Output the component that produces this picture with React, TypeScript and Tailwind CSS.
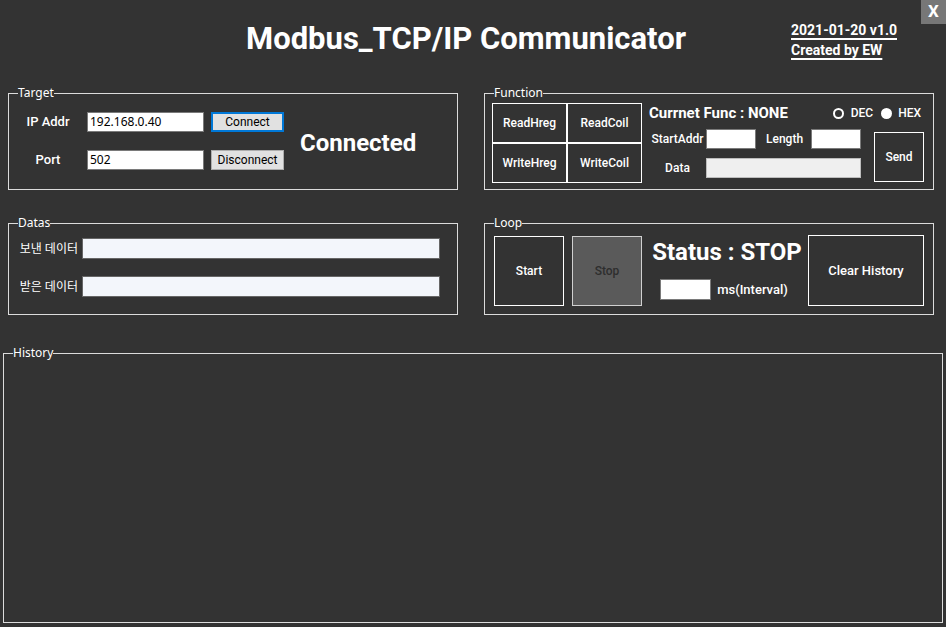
import type { ReactNode } from 'react';

const ui = "font-['Roboto',sans-serif]";
const thin = "font-['Noto_Sans','Noto_Sans_CJK_KR',sans-serif]";

const Group = ({ label, className, children }: { label: string; className?: string; children: ReactNode }) => (
  <fieldset className={`border border-[#dcdcdc] ${className ?? ''}`}>
    <legend className={`ml-[9px] px-0 text-[12px] leading-[14px] text-white ${thin}`}>{label}</legend>
    {children}
  </fieldset>
);

const OutlineBtn = ({ children, className }: { children: ReactNode; className?: string }) => (
  <div className={`flex items-center justify-center border border-white text-[12px] font-medium text-white ${className ?? ''}`}>
    {children}
  </div>
);

export default function App() {
  return (
    <div className={`w-[946px] h-[627px] bg-[#333333] flex flex-col overflow-hidden ${ui}`}>
      {/* header */}
      <div className="h-[86px] flex items-start">
        <div className="pl-[246px] pt-[21px] text-[31px] leading-[36px] font-bold text-white">
          Modbus_TCP/IP Communicator
        </div>
        <div className="ml-auto pt-[20px] flex flex-col text-[14px] leading-[20px] font-bold text-white">
          <span className="underline underline-offset-[3px] decoration-2">2021-01-20 v1.0</span>
          <span className="underline underline-offset-[3px] decoration-2">Created by EW</span>
        </div>
        <div className="ml-[24px] w-[25px] h-[24px] bg-[#777777] flex items-center justify-center text-white font-bold text-[17px]">
          X
        </div>
      </div>

      {/* row 1 */}
      <div className="flex pl-[8px] gap-[26px]">
        <Group label="Target" className="w-[450px]">
          <div className="flex items-start h-[89px] pt-[12px]">
            <div className="flex flex-col gap-[18px]">
              <div className="flex items-center h-[20px]">
                <span className="w-[78px] text-center text-[13px] font-medium text-white">IP Addr</span>
                <div className={`w-[117px] h-[20px] bg-white border border-[#7a7a7a] px-[2px] text-[12px] leading-[18px] text-black ${thin}`}>192.168.0.40</div>
                <div className="ml-[7px] w-[73px] h-[20px] bg-[#e1e1e1] border-2 border-[#0078d7] flex items-center justify-center text-[12px] text-black">Connect</div>
              </div>
              <div className="flex items-center h-[20px]">
                <span className="w-[78px] text-center text-[13px] font-medium text-white">Port</span>
                <div className={`w-[117px] h-[20px] bg-white border border-[#7a7a7a] px-[2px] text-[12px] leading-[18px] text-black ${thin}`}>502</div>
                <div className="ml-[7px] w-[73px] h-[20px] bg-[#e1e1e1] border border-[#adadad] flex items-center justify-center text-[12px] text-black">Disconnect</div>
              </div>
            </div>
            <div className="ml-[16px] mt-[17px] text-[24px] leading-[28px] font-bold text-white">Connected</div>
          </div>
        </Group>

        <Group label="Function" className="w-[450px]">
          <div className="flex h-[89px] pl-[7px] pt-[3px]">
            <div className="grid grid-cols-[75px_75px] grid-rows-[40px_40px] w-[150px] h-[80px]">
              <OutlineBtn>ReadHreg</OutlineBtn>
              <OutlineBtn>ReadCoil</OutlineBtn>
              <OutlineBtn>WriteHreg</OutlineBtn>
              <OutlineBtn>WriteCoil</OutlineBtn>
            </div>
            <div className="ml-[7px] w-[276px] flex flex-col">
              <div className="flex items-center h-[20px]">
                <span className="text-[15px] font-bold text-white">Currnet Func : NONE</span>
                <div className="ml-auto mr-[4px] flex items-center text-[12px] font-medium text-white">
                  <span className="w-[11px] h-[11px] rounded-full border-2 border-white" />
                  <span className="ml-[7px]">DEC</span>
                  <span className="ml-[8px] w-[11px] h-[11px] rounded-full bg-white" />
                  <span className="ml-[6px]">HEX</span>
                </div>
              </div>
              <div className="flex mt-[6px]">
                <div className="flex flex-col gap-[9px]">
                  <div className="flex items-center h-[20px]">
                    <span className="w-[57px] text-center text-[12px] font-medium text-white">StartAddr</span>
                    <div className="w-[50px] h-[20px] bg-white border border-[#7a7a7a]" />
                    <span className="ml-[10px] w-[45px] text-left text-[12px] font-medium text-white">Length</span>
                    <div className="w-[50px] h-[20px] bg-white border border-[#7a7a7a]" />
                  </div>
                  <div className="flex items-center h-[20px]">
                    <span className="w-[57px] text-center text-[12px] font-medium text-white">Data</span>
                    <div className="w-[155px] h-[20px] bg-[#efefef] border border-[#bdbdbd]" />
                  </div>
                </div>
                <OutlineBtn className="ml-[13px] mt-[3px] w-[50px] h-[50px]">Send</OutlineBtn>
              </div>
            </div>
          </div>
        </Group>
      </div>

      {/* row 2 */}
      <div className="flex pl-[8px] gap-[26px] mt-[26px]">
        <Group label="Datas" className="w-[450px]">
          <div className="flex flex-col gap-[17px] h-[84px] pt-[8px]">
            <div className="flex items-center">
              <span className={`w-[69px] text-right text-[12px] text-white ${thin}`}>보낸 데이터</span>
              <div className="ml-[4px] w-[358px] h-[21px] bg-[#f3f6fb] border border-[#666666]" />
            </div>
            <div className="flex items-center">
              <span className={`w-[69px] text-right text-[12px] text-white ${thin}`}>받은 데이터</span>
              <div className="ml-[4px] w-[358px] h-[21px] bg-[#f3f6fb] border border-[#666666]" />
            </div>
          </div>
        </Group>

        <Group label="Loop" className="w-[450px]">
          <div className="flex h-[84px] pl-[9px] pt-[5px]">
            <OutlineBtn className="w-[70px] h-[70px] mt-[1px]">Start</OutlineBtn>
            <div className="ml-[8px] mt-[1px] w-[70px] h-[70px] bg-[#5a5a5a] border border-[#d0d0d0] flex items-center justify-center text-[12px] font-medium text-[#2e2e2e]">
              Stop
            </div>
            <div className="w-[166px] flex flex-col items-center">
              <span className="text-[24px] leading-[32px] font-bold text-white mt-[1px] ml-[4px]">Status : STOP</span>
              <div className="flex items-center mt-[11px] ml-[-2px]">
                <div className="w-[51px] h-[21px] bg-white border border-[#7a7a7a]" />
                <span className="ml-[6px] text-[13px] font-medium text-white">ms(Interval)</span>
              </div>
            </div>
            <OutlineBtn className="w-[116px] h-[71px] text-[13px]">Clear History</OutlineBtn>
          </div>
        </Group>
      </div>

      {/* history */}
      <div className="pl-[3px] mt-[31px]">
        <Group label="History" className="w-[940px]">
          <div className="h-[262px]" />
        </Group>
      </div>
    </div>
  );
}
